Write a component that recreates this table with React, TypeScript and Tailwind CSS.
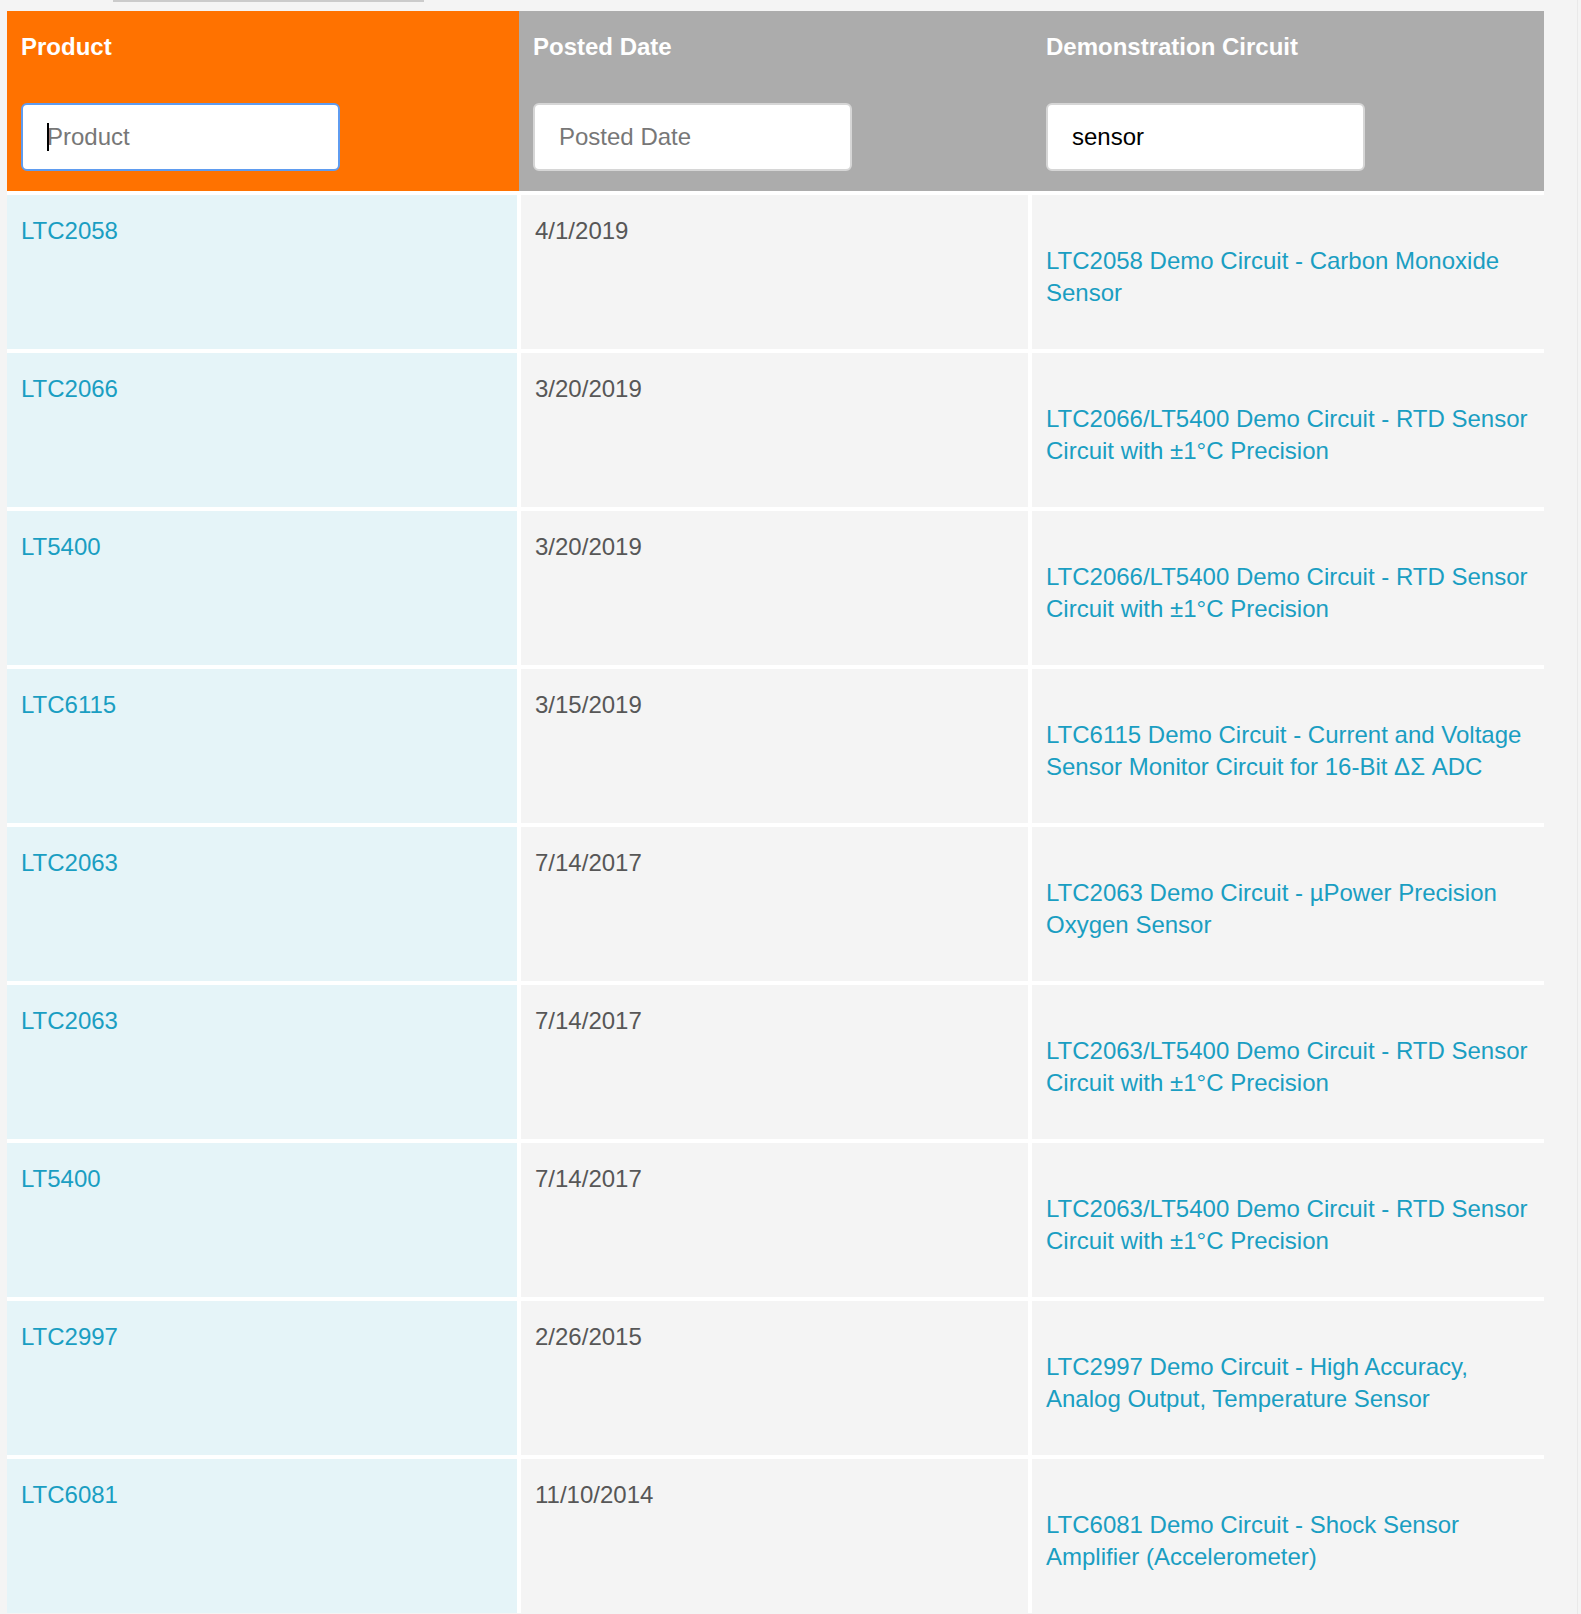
import React from "react";

const rows = [
  { product: "LTC2058", date: "4/1/2019", circuit: "LTC2058 Demo Circuit - Carbon Monoxide Sensor" },
  { product: "LTC2066", date: "3/20/2019", circuit: "LTC2066/LT5400 Demo Circuit - RTD Sensor Circuit with ±1°C Precision" },
  { product: "LT5400", date: "3/20/2019", circuit: "LTC2066/LT5400 Demo Circuit - RTD Sensor Circuit with ±1°C Precision" },
  { product: "LTC6115", date: "3/15/2019", circuit: "LTC6115 Demo Circuit - Current and Voltage Sensor Monitor Circuit for 16-Bit ΔΣ ADC" },
  { product: "LTC2063", date: "7/14/2017", circuit: "LTC2063 Demo Circuit - µPower Precision Oxygen Sensor" },
  { product: "LTC2063", date: "7/14/2017", circuit: "LTC2063/LT5400 Demo Circuit - RTD Sensor Circuit with ±1°C Precision" },
  { product: "LT5400", date: "7/14/2017", circuit: "LTC2063/LT5400 Demo Circuit - RTD Sensor Circuit with ±1°C Precision" },
  { product: "LTC2997", date: "2/26/2015", circuit: "LTC2997 Demo Circuit - High Accuracy, Analog Output, Temperature Sensor" },
  { product: "LTC6081", date: "11/10/2014", circuit: "LTC6081 Demo Circuit - Shock Sensor Amplifier (Accelerometer)" },
];

function FilterInput({ placeholder, value, focused }: { placeholder: string; value?: string; focused?: boolean }) {
  return (
    <div className="relative w-[319px]">
      <input
        readOnly
        placeholder={placeholder}
        defaultValue={value}
        className={`block h-[68px] w-full rounded-[6px] border-2 bg-white pl-[24px] text-[24px] font-normal text-black outline-none placeholder:text-[#777] ${
          focused ? "border-[#5f9cf0]" : "border-[#d6d6d6]"
        }`}
      />
      {focused && <span className="absolute left-[26px] top-[20px] h-[28px] w-[2px] bg-black" />}
    </div>
  );
}

export default function App() {
  return (
    <div
      className="h-[1614px] w-[1581px] overflow-hidden bg-[#f4f4f4]"
      style={{ fontFamily: '"Liberation Sans", Arial, sans-serif' }}
    >
      <div className="h-full w-[1578px] border-r border-[#e9e9e9]">
        <div className="h-[11px]">
          <div className="ml-[113px] h-[2px] w-[311px] bg-[#cbcbcb]" />
        </div>

        <div className="ml-[7px] w-[1537px]">
          {/* header */}
          <div className="grid h-[180px] grid-cols-[512px_513px_1fr] text-[24px] font-bold leading-[32px] text-white">
            <div className="flex flex-col gap-[40px] bg-[#ff7200] px-[14px] pt-[20px]">
              <span>Product</span>
              <FilterInput placeholder="Product" focused />
            </div>
            <div className="flex flex-col gap-[40px] bg-[#acacac] px-[14px] pt-[20px]">
              <span>Posted Date</span>
              <FilterInput placeholder="Posted Date" />
            </div>
            <div className="flex flex-col gap-[40px] bg-[#acacac] px-[14px] pt-[20px]">
              <span>Demonstration Circuit</span>
              <FilterInput placeholder="Demonstration Circuit" value="sensor" />
            </div>
          </div>

          {/* body */}
          <div className="bg-white text-[24px] leading-[32px]">
            {rows.map((row, i) => (
              <div key={i} className="grid h-[158px] grid-cols-[510px_507px_1fr] gap-x-[4px] pt-[4px]">
                <div className="bg-[#e5f4f8] px-[14px] pt-[20px]">
                  <a href="#" className="text-[#1a9ec2]">{row.product}</a>
                </div>
                <div className="bg-[#f4f4f4] px-[14px] pt-[20px] text-[#575757]">{row.date}</div>
                <div className="bg-[#f4f4f4] pl-[14px] pr-[8px] pt-[50px]">
                  <a href="#" className="text-[#1a9ec2]">{row.circuit}</a>
                </div>
              </div>
            ))}
          </div>
        </div>
      </div>
    </div>
  );
}
